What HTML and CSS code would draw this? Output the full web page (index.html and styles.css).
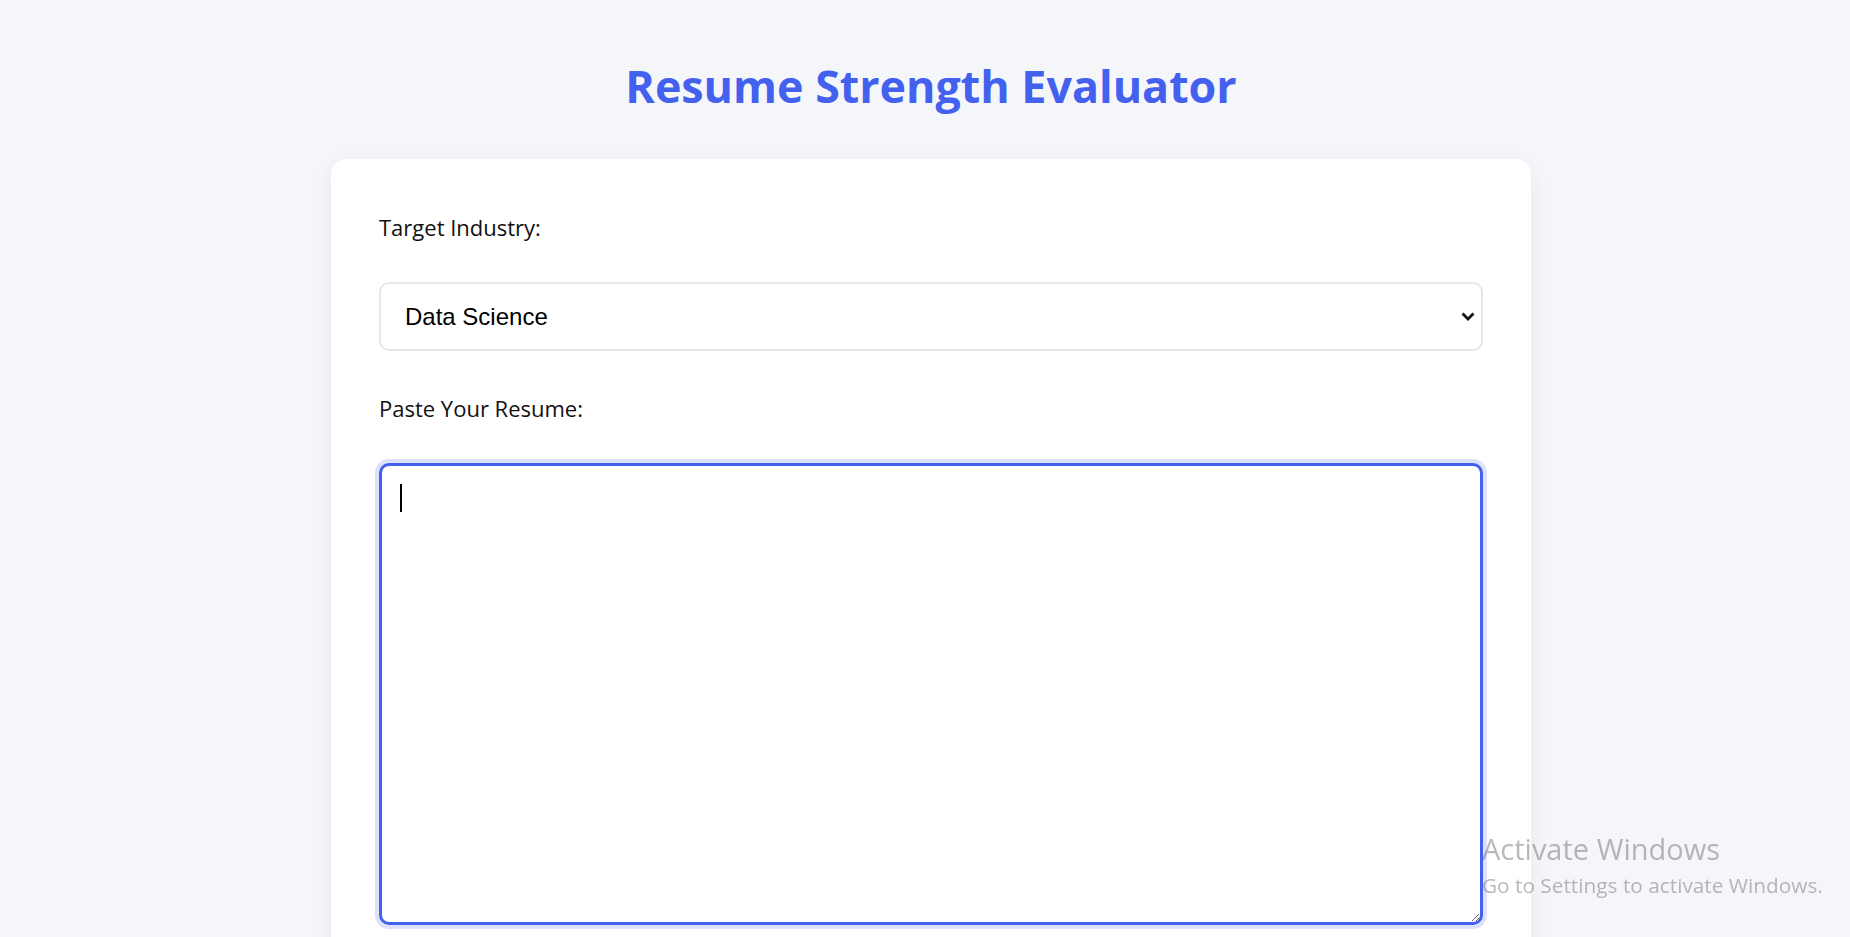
FILE: index.html
```html
<!DOCTYPE html>
<html lang="en">
<head>
<meta charset="utf-8">
<title>Resume Strength Evaluator</title>
<link rel="stylesheet" href="styles.css">
</head>
<body>
<main class="page">
  <h1 class="title">Resume Strength Evaluator</h1>
  <section class="card">
    <label class="field-label" for="industry">Target Industry:</label>
    <div class="select-wrap">
      <select id="industry" class="select">
        <option>Data Science</option>
        <option>Software Engineering</option>
        <option>Marketing</option>
        <option>Finance</option>
      </select>
      <svg class="chevron" width="14" height="9" viewBox="0 0 14 9" aria-hidden="true"><path d="M1.5 1.5 L7 7 L12.5 1.5" fill="none" stroke="#111" stroke-width="2.8"/></svg>
    </div>
    <label class="field-label" for="resume">Paste Your Resume:</label>
    <div class="textarea-wrap">
      <textarea id="resume" class="textarea is-focused"></textarea>
      <span class="caret"></span>
    </div>
  </section>
</main>
<div class="watermark">
  <div class="wm-title">Activate Windows</div>
  <div class="wm-sub">Go to Settings to activate Windows.</div>
</div>
</body>
</html>
```
FILE: styles.css
```css
* { box-sizing: border-box; }
html, body { margin: 0; padding: 0; }
body {
  background: #f5f6fa;
  font-family: "Open Sans", "Noto Sans", sans-serif;
  color: #111;
}
.page {
  padding: 54px 0 0 12px;
}
.title {
  margin: 0 0 41px;
  text-align: center;
  font-size: 44.8px;
  line-height: 64px;
  font-weight: 700;
  color: #4361ee;
}
.card {
  width: 1200px;
  margin: 0 auto;
  background: #fff;
  border-radius: 15px;
  box-shadow: 0 4px 20px rgba(20, 30, 60, 0.06);
  padding: 53px 48px 48px;
}
.field-label {
  display: block;
  font-size: 22px;
  line-height: 30px;
  margin-bottom: 40px;
  color: #111;
}
.select-wrap {
  position: relative;
  margin-bottom: 42px;
}
.select {
  display: block;
  width: 100%;
  height: 69px;
  appearance: none;
  -webkit-appearance: none;
  border: 2.5px solid #e4e7eb;
  border-radius: 10px;
  background: #fff;
  padding: 0 24px;
  font-family: "Liberation Sans", Arial, sans-serif;
  font-size: 24px;
  color: #000;
  outline: none;
}
.chevron {
  position: absolute;
  right: 8px;
  top: 30px;
  pointer-events: none;
}
.textarea-wrap {
  position: relative;
}
.textarea {
  display: block;
  width: 100%;
  height: 462px;
  border: 3px solid #4361ee;
  border-radius: 10px;
  padding: 18px;
  font-family: "Liberation Sans", Arial, sans-serif;
  font-size: 24px;
  background: #fff;
  outline: none;
  resize: vertical;
}
.textarea.is-focused {
  box-shadow: 0 0 0 4px rgba(67, 97, 238, 0.18);
}
.caret {
  position: absolute;
  left: 21px;
  top: 21px;
  width: 1.5px;
  height: 28px;
  background: #000;
}
.watermark {
  position: fixed;
  left: 1482px;
  top: 831px;
  font-family: "Open Sans", "Noto Sans", sans-serif;
  color: rgba(100, 100, 100, 0.45);
  pointer-events: none;
}
.wm-title {
  font-size: 29px;
  line-height: 36px;
  font-weight: 400;
  margin-bottom: 4px;
}
.wm-sub {
  font-size: 20.8px;
  line-height: 28px;
}
```
